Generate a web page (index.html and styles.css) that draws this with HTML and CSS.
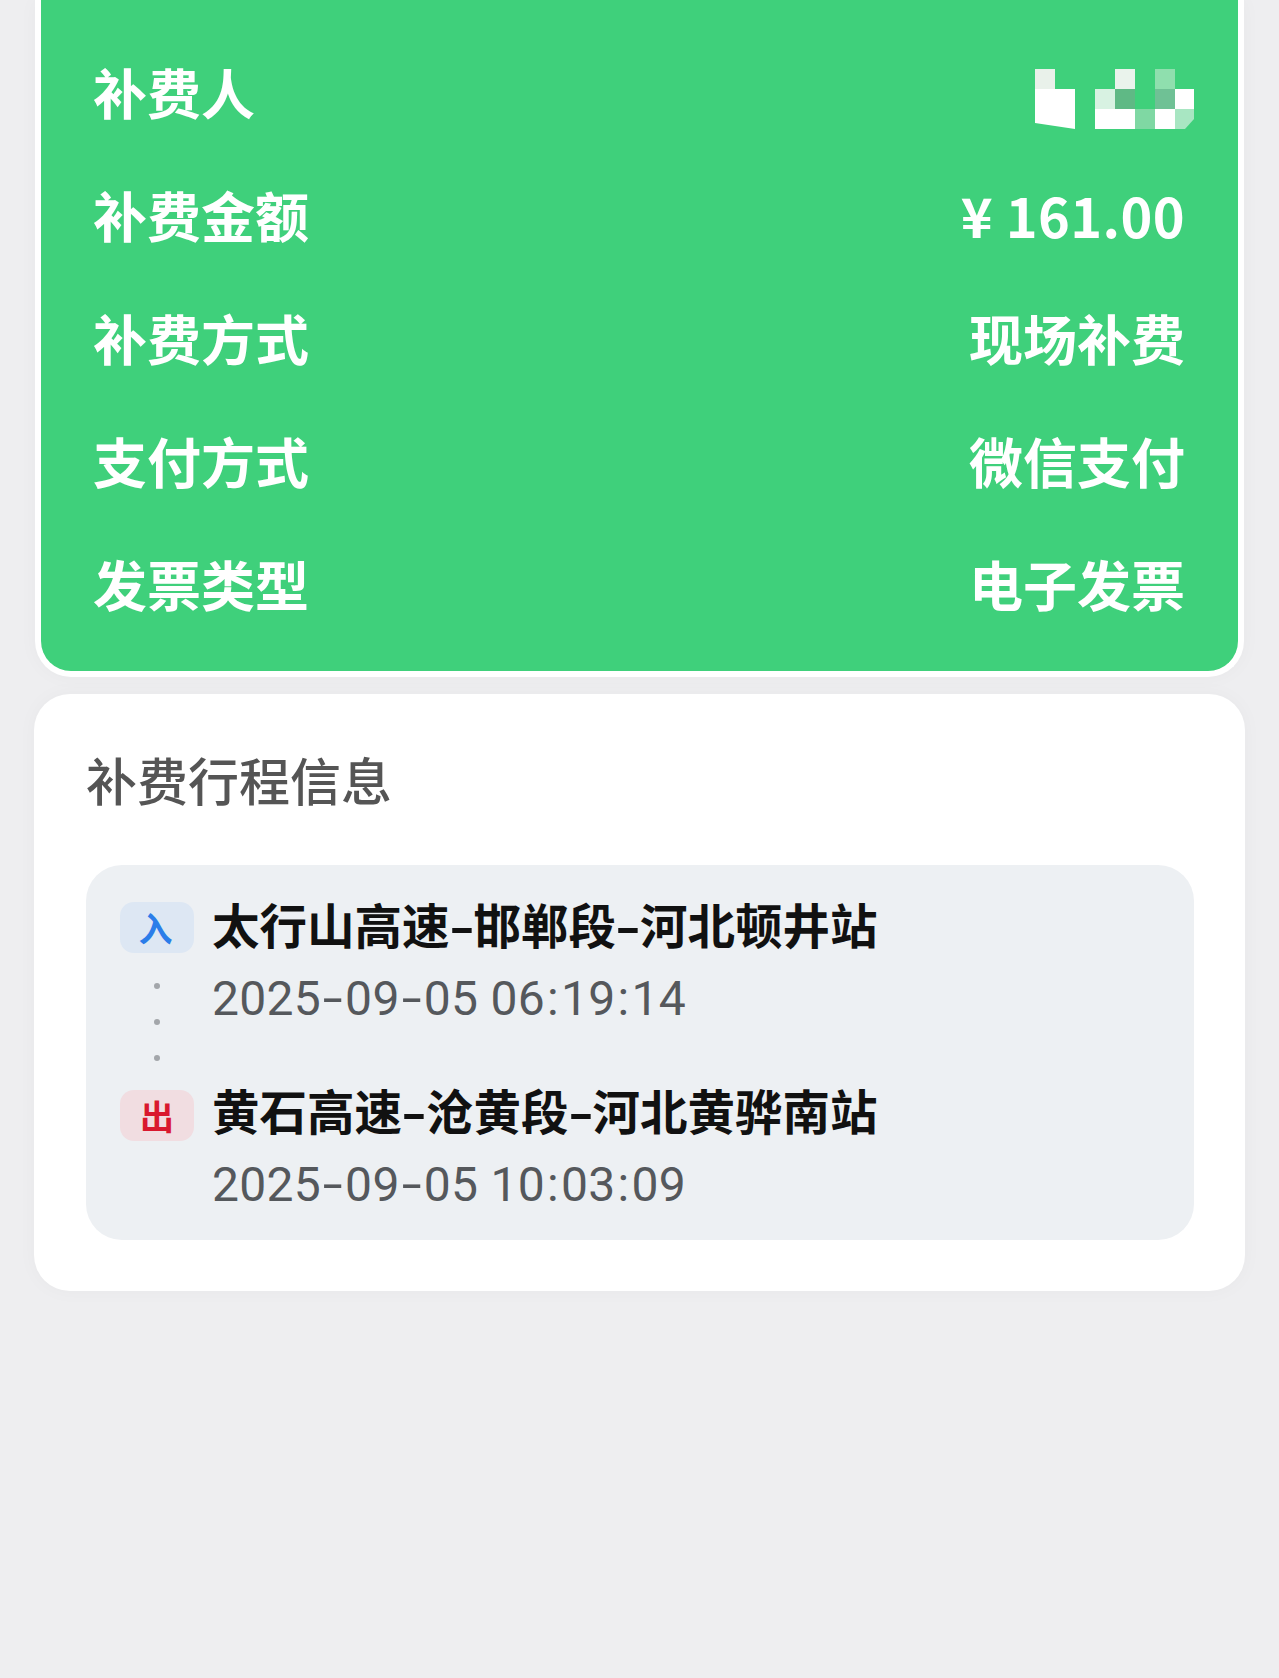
FILE: index.html
```html
<!doctype html>
<html lang="zh-CN">
<head>
	<meta charset="UTF-8">
	<title>补费详情</title>
	<link rel="stylesheet" href="styles.css">
</head>
<body>
	<div class="summary">
		<div class="row">
			<span>补费人</span>
			<svg class="mosaic" width="160" height="60" viewBox="0 0 160 60">
				<rect x="1" y="0" width="20" height="20" fill="#e9f1ea"/>
				<path d="M1 20H41V60L1 54Z" fill="#fff"/>
				<rect x="81" y="0" width="20" height="20" fill="#eaf3ec"/>
				<rect x="121" y="0" width="20" height="20" fill="#8fdfae"/>
				<rect x="61" y="20" width="20" height="20" fill="#d8f2e2"/>
				<rect x="81" y="20" width="20" height="20" fill="#5fb985"/>
				<rect x="121" y="20" width="20" height="20" fill="#6fc195"/>
				<rect x="141" y="20" width="19" height="20" fill="#fff"/>
				<rect x="61" y="40" width="40" height="20" fill="#fff"/>
				<rect x="101" y="40" width="20" height="20" fill="#7fd8a3"/>
				<rect x="121" y="40" width="20" height="20" fill="#fff"/>
				<path d="M141 40H160V50L151 60H141Z" fill="#a8e6c2"/>
			</svg>
		</div>
		<div class="row"><span>补费金额</span><span class="value amount">¥ 161.00</span></div>
		<div class="row"><span>补费方式</span><span class="value">现场补费</span></div>
		<div class="row"><span>支付方式</span><span class="value">微信支付</span></div>
		<div class="row"><span>发票类型</span><span class="value">电子发票</span></div>
	</div>

	<div class="trip">
		<div class="trip-title">补费行程信息</div>
		<div class="route">
			<div class="rail">
				<div class="badge in">入</div>
				<i class="dot"></i>
				<i class="dot"></i>
				<i class="dot"></i>
				<div class="badge out">出</div>
			</div>
			<div class="stops">
				<div class="stop">
					<div class="station">太行山高速<span class="dash">-</span>邯郸段<span class="dash">-</span>河北顿井站</div>
					<div class="time">2025<span class="dash">-</span>09<span class="dash">-</span>05 06<span class="colon">:</span>19<span class="colon">:</span>14</div>
				</div>
				<div class="stop">
					<div class="station">黄石高速<span class="dash">-</span>沧黄段<span class="dash">-</span>河北黄骅南站</div>
					<div class="time">2025<span class="dash">-</span>09<span class="dash">-</span>05 10<span class="colon">:</span>03<span class="colon">:</span>09</div>
				</div>
			</div>
		</div>
	</div>
</body>
</html>
```

FILE: styles.css
```css
body{
	margin: 0;
	padding: 0 34px;
	height: 1678px;
	box-sizing: border-box;
	overflow: hidden;
	background: #eeeef0;
	font-family: "Noto Sans CJK SC", sans-serif;
}
.summary{
	margin: 0 1px;
	padding: 30px 43px 26px 52px;
	background: #3fd07b;
	border: 6px solid #fff;
	border-top: 0;
	border-radius: 0 0 36px 36px;
	box-shadow: 0 0 20px rgba(0,0,0,.03);
	color: #fff;
	font-size: 54px;
	font-weight: 700;
}
.row{
	display: flex;
	justify-content: space-between;
	align-items: center;
	height: 123px;
}
.value{
	margin-right: 10px;
}
.amount{
	letter-spacing: .4px;
}
.mosaic{
	display: block;
	margin-top: 14px;
	margin-right: 1px;
}
.trip{
	margin-top: 17px;
	padding: 49px 51px 51px 52px;
	background: #fff;
	border-radius: 36px;
	box-shadow: 0 0 20px rgba(0,0,0,.03);
}
.trip-title{
	font-size: 51px;
	line-height: 72px;
	font-weight: 500;
	color: #555;
}
.route{
	display: flex;
	gap: 18px;
	margin-top: 50px;
	padding: 23px 34px 19px;
	background: #edf0f3;
	border-radius: 36px;
}
.rail{
	display: flex;
	flex-direction: column;
	align-items: center;
	width: 74px;
	margin-top: 14px;
}
.badge{
	box-sizing: border-box;
	width: 74px;
	height: 51px;
	border-radius: 14px;
	text-align: center;
	line-height: 51px;
	font-size: 34px;
	font-weight: 700;
}
.in{
	padding-right: 3px;
	background: #dde7f3;
	color: #2b7de9;
	margin-bottom: 30px;
}
.out{
	background: #f1dde1;
	color: #d9182e;
	margin-top: -1px;
}
.dot{
	display: block;
	width: 6px;
	height: 6px;
	margin-bottom: 30px;
	border-radius: 50%;
	background: #a3a6aa;
}
.stop{
	margin-bottom: 39px;
}
.stop:last-child{
	margin-bottom: 0;
}
.station{
	font-size: 47.5px;
	line-height: 72px;
	font-weight: 700;
	color: #111;
}
.time{
	margin-top: 3px;
	font-family: Roboto, "Noto Sans CJK SC", sans-serif;
	font-size: 48px;
	line-height: 72px;
	letter-spacing: .3px;
	color: #55585c;
}
/* the hyphens in the screenshot are wider than any installed font draws them */
.dash{
	display: inline-block;
	width: 24px;
	text-align: center;
	transform: scaleX(1.5);
}
.colon{
	margin: 0 2px;
}
```
